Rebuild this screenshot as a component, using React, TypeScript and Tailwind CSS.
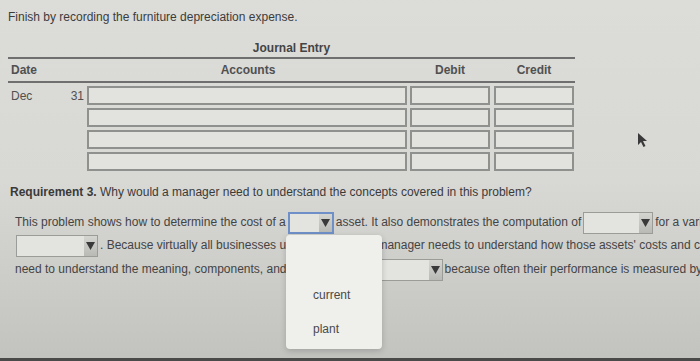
import React from 'react';

function Box({ w }: { w: string }) {
  return <div className={`h-[19px] ${w} border-2 border-[#8f918f] bg-[#e2e2df]`} />;
}

function Select({ w, focus = false }: { w: string; focus?: boolean }) {
  return (
    <span
      className={`mx-[2px] inline-flex h-[22px] ${w} items-stretch justify-end border align-middle ${
        focus ? 'border-2 border-[#6f8fc8]' : 'border-[#9a9c9a]'
      } bg-[#e3e3e0]`}
    >
      <span className="flex w-[13px] items-center justify-center bg-linear-to-b from-[#d4d4d1] to-[#b9b9b6]">
        <svg width="9" height="8" viewBox="0 0 9 8">
          <path d="M0 0 H9 L4.5 8 Z" fill="#3a3a3a" />
        </svg>
      </span>
    </span>
  );
}

const rows = ['Dec', '', '', ''];

export default function App() {
  return (
    <div className="relative h-[361px] w-[700px] overflow-hidden bg-linear-to-b from-[#dcdcd9] via-[#d8d8d5] to-[#c2c2bf] font-['Liberation_Sans',Arial,sans-serif] text-[12px] text-[#3c3c3c]">
      <p className="pl-2 pt-[10px] leading-[14px]">Finish by recording the furniture depreciation expense.</p>

      <div className="ml-2 mt-[17px] w-[567px]">
        <div className="pb-[2px] text-center font-bold leading-[14px] text-[#444]">Journal Entry</div>
        <div className="flex h-[26px] items-center border-y-2 border-[#6e6f6e] font-bold text-[#505050]">
          <span className="w-[81px] pl-[3px]">Date</span>
          <span className="w-[318px] text-center">Accounts</span>
          <span className="ml-[3px] w-[80px] text-center">Debit</span>
          <span className="ml-[4px] w-[80px] text-center">Credit</span>
        </div>
        <div className="mt-[3px] flex flex-col gap-[3px]">
          {rows.map((m, i) => (
            <div key={i} className="flex items-center text-[#505050]">
              <span className="w-[58px] pl-[3px]">{m}</span>
              <span className="w-[21px] pr-[3px] text-right">{i === 0 ? '31' : ''}</span>
              <Box w="w-[320px]" />
              <div className="w-[3px]" />
              <Box w="w-[80px]" />
              <div className="w-[4px]" />
              <Box w="w-[80px]" />
            </div>
          ))}
        </div>
      </div>

      <p className="mt-[14px] pl-[10px] leading-[14px] text-[#3a3a3a]">
        <span className="font-bold">Requirement 3.</span> Why would a manager need to understand the concepts covered in this problem?
      </p>

      <div className="mt-[12px] whitespace-nowrap pl-[15px] leading-[23px] text-[#444]">
        <div>
          This problem shows how to determine the cost of a
          <Select w="w-[46px]" focus />
          asset. It also demonstrates the computation of
          <Select w="w-[70px]" />
          for a variety of assets
        </div>
        <div className="-ml-[1px]">
          <Select w="w-[82px]" />. Because virtually all businesses us
          <span className="tracking-[-0.3px]">e plant assets, a </span>
          manager needs to understand how those assets' costs and computations
        </div>
        <div className="mt-[1px]">
          need to understand the meaning, components, and depreciation of
          <Select w="w-[72px]" />
          because often their performance is measured by the
        </div>
      </div>

      <div className="absolute left-[286px] top-[235px] w-[96px] rounded-[4px] bg-[#efefec] pt-[9px] pb-[3px] shadow-[0_2px_6px_rgba(0,0,0,0.18)]">
        <div className="h-[34px]" />
        <div className="flex h-[34px] items-center pl-[27px] text-[#4a4a4a]">current</div>
        <div className="flex h-[34px] items-center pl-[27px] text-[#4a4a4a]">plant</div>
      </div>

      <svg className="absolute left-[637px] top-[132px]" width="12" height="16" viewBox="0 0 12 16">
        <path d="M1 1 L1 13 L4 10 L6.5 15 L8.5 14 L6 9 L10 9 Z" fill="#3a3a3a" />
      </svg>

      <div className="absolute bottom-0 left-0 h-[3px] w-full bg-[#4a4a48]" />
    </div>
  );
}
